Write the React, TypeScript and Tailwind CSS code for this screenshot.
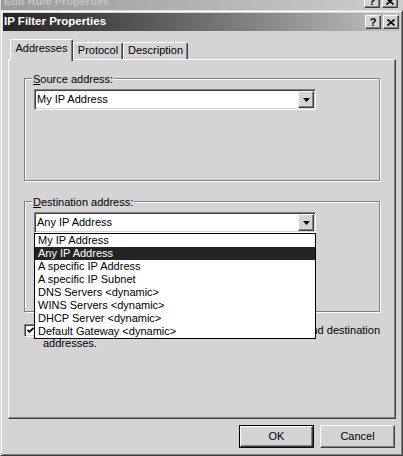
const face = "bg-[#d4d4d4]";
const raised =
  "border border-t-white border-l-white border-r-[#404040] border-b-[#404040] shadow-[inset_-1px_-1px_0_#808080]";
const sunken =
  "border border-t-[#808080] border-l-[#808080] border-r-white border-b-white shadow-[inset_1px_1px_0_#404040,inset_-1px_-1px_0_#d4d4d4]";

const destOptions = [
  "My IP Address",
  "Any IP Address",
  "A specific IP Address",
  "A specific IP Subnet",
  "DNS Servers <dynamic>",
  "WINS Servers <dynamic>",
  "DHCP Server <dynamic>",
  "Default Gateway <dynamic>",
];

function TitleButtons() {
  return (
    <div className="flex gap-[2px] mr-[1px]">
      <div className={`w-[16px] h-[14px] ${face} ${raised} flex items-center justify-center`}>
        <span className="text-[11px] font-bold leading-none text-black">?</span>
      </div>
      <div className={`w-[16px] h-[14px] ${face} ${raised} flex items-center justify-center`}>
        <svg width="8" height="7" viewBox="0 0 8 7">
          <path d="M0.5 0.5L7.5 6.5M7.5 0.5L0.5 6.5" stroke="black" strokeWidth="1.6" />
        </svg>
      </div>
    </div>
  );
}

function ArrowButton() {
  return (
    <div className={`ml-auto mr-[1px] w-[16px] h-[17px] ${face} ${raised} flex items-center justify-center`}>
      <svg width="7" height="4" viewBox="0 0 7 4">
        <path d="M0 0H7L3.5 4Z" fill="black" />
      </svg>
    </div>
  );
}

function Combo({ value, open }: { value: string; open?: boolean }) {
  return (
    <div className={`relative mt-[3px] ml-[9px] w-[282px] h-[21px] bg-white ${sunken} flex items-center`}>
      <span className="pl-[2px] leading-[13px] text-black">{value}</span>
      <ArrowButton />
      {open && (
        <div className="absolute -left-[1px] top-[20px] z-20 w-[282px] bg-white border border-black">
          {destOptions.map((opt) => (
            <div
              key={opt}
              className={`h-[13px] leading-[13px] pl-[3px] whitespace-nowrap ${
                opt === value ? "bg-[#242424] text-white" : "text-black"
              }`}
            >
              {opt}
            </div>
          ))}
        </div>
      )}
    </div>
  );
}

function GroupBox({
  label,
  height,
  className,
  children,
}: {
  label: React.ReactNode;
  height: string;
  className?: string;
  children: React.ReactNode;
}) {
  return (
    <div
      className={`ml-[15px] w-[356px] ${height} border border-[#808080] shadow-[inset_1px_1px_0_#fff,1px_1px_0_#fff] ${className ?? ""}`}
    >
      <div className={`-mt-[6px] ml-[7px] w-fit px-[1px] leading-[13px] ${face} text-black`}>{label}</div>
      {children}
    </div>
  );
}

export default function App() {
  return (
    <div className="w-[403px] h-[456px] overflow-hidden bg-[#d4d4d4] flex flex-col font-['Liberation_Sans',Arial,sans-serif] text-[11px]">
      {/* window behind the dialog, mostly hidden */}
      <div className="h-[10px] overflow-hidden border-l border-[#dcdcdc]">
        <div className="h-[18px] -mt-[8px] flex items-center bg-gradient-to-r from-[#9a9a9a] to-[#cecece]">
          <span className="pl-[3px] font-bold text-[11px] text-[#c4c4c4]">Edit Rule Properties</span>
          <div className="ml-auto mr-[4px]">
            <TitleButtons />
          </div>
        </div>
      </div>

      {/* dialog */}
      <div className="flex-1 flex flex-col p-[2px] border border-t-[#dcdcdc] border-l-[#dcdcdc] border-r-[#404040] border-b-[#404040] shadow-[inset_1px_1px_0_#fff,inset_-1px_-1px_0_#808080]">
        <div className="h-[18px] flex items-center bg-gradient-to-r from-[#242424] to-[#c3c3c3]">
          <span className="pl-[1px] font-bold text-[11.5px] text-white">IP Filter Properties</span>
          <div className="ml-auto">
            <TitleButtons />
          </div>
        </div>

        <div className="pt-[8px] pl-[5px] flex flex-col">
          {/* tabs */}
          <div className="flex items-end pl-[2px]">
            <div className={`relative z-10 w-[63px] h-[22px] -mb-[2px] ${face} border-t border-l border-r border-t-white border-l-white border-r-[#404040] shadow-[inset_-1px_0_0_#808080] rounded-t-[2px] pt-[2px] text-center leading-[13px] text-black`}>
              Addresses
            </div>
            <div className={`w-[50px] h-[17px] ${face} border-t border-l border-r border-t-white border-l-white border-r-[#404040] shadow-[inset_-1px_0_0_#808080] rounded-t-[2px] pt-[1px] text-center leading-[13px] text-black`}>
              Protocol
            </div>
            <div className={`w-[65px] h-[17px] ${face} border-t border-l border-r border-t-white border-l-white border-r-[#404040] shadow-[inset_-1px_0_0_#808080] rounded-t-[2px] pt-[1px] text-center leading-[13px] text-black`}>
              Description
            </div>
          </div>

          {/* tab page */}
          <div className={`w-[388px] h-[360px] ${raised} flex flex-col`}>
            <GroupBox
              className="mt-[18px]"
              height="h-[103px]"
              label={
                <>
                  <span className="underline underline-offset-[1px]">S</span>ource address:
                </>
              }
            >
              <Combo value="My IP Address" />
            </GroupBox>

            <GroupBox
              className="mt-[20px]"
              height="h-[111px]"
              label={
                <>
                  <span className="underline underline-offset-[1px]">D</span>estination address:
                </>
              }
            >
              <Combo value="Any IP Address" open />
            </GroupBox>

            <div className="mt-[12px] ml-[15px] flex items-start gap-[6px]">
              <div className={`w-[13px] h-[13px] bg-white ${sunken} flex items-center justify-center shrink-0`}>
                <svg width="7" height="7" viewBox="0 0 7 7">
                  <path d="M0.5 3L2.5 5L6.5 1" stroke="black" strokeWidth="1.8" fill="none" />
                </svg>
              </div>
              <div className="text-black leading-[13px]">
                <div className="w-[337px] flex justify-end overflow-hidden">
                  <span className="whitespace-nowrap">
                    Mirrored. Also match packets with the exact opposite source and destination
                  </span>
                </div>
                <div>addresses.</div>
              </div>
            </div>
          </div>

          {/* buttons */}
          <div className="mt-[6px] w-[388px] pr-[1px] flex justify-end gap-[6px]">
            <div className="w-[75px] h-[23px] border border-black">
              <div className={`w-full h-full ${face} ${raised} flex items-center justify-center text-black`}>
                OK
              </div>
            </div>
            <div className={`w-[75px] h-[23px] ${face} ${raised} flex items-center justify-center text-black`}>
              Cancel
            </div>
          </div>
        </div>
      </div>
    </div>
  );
}
